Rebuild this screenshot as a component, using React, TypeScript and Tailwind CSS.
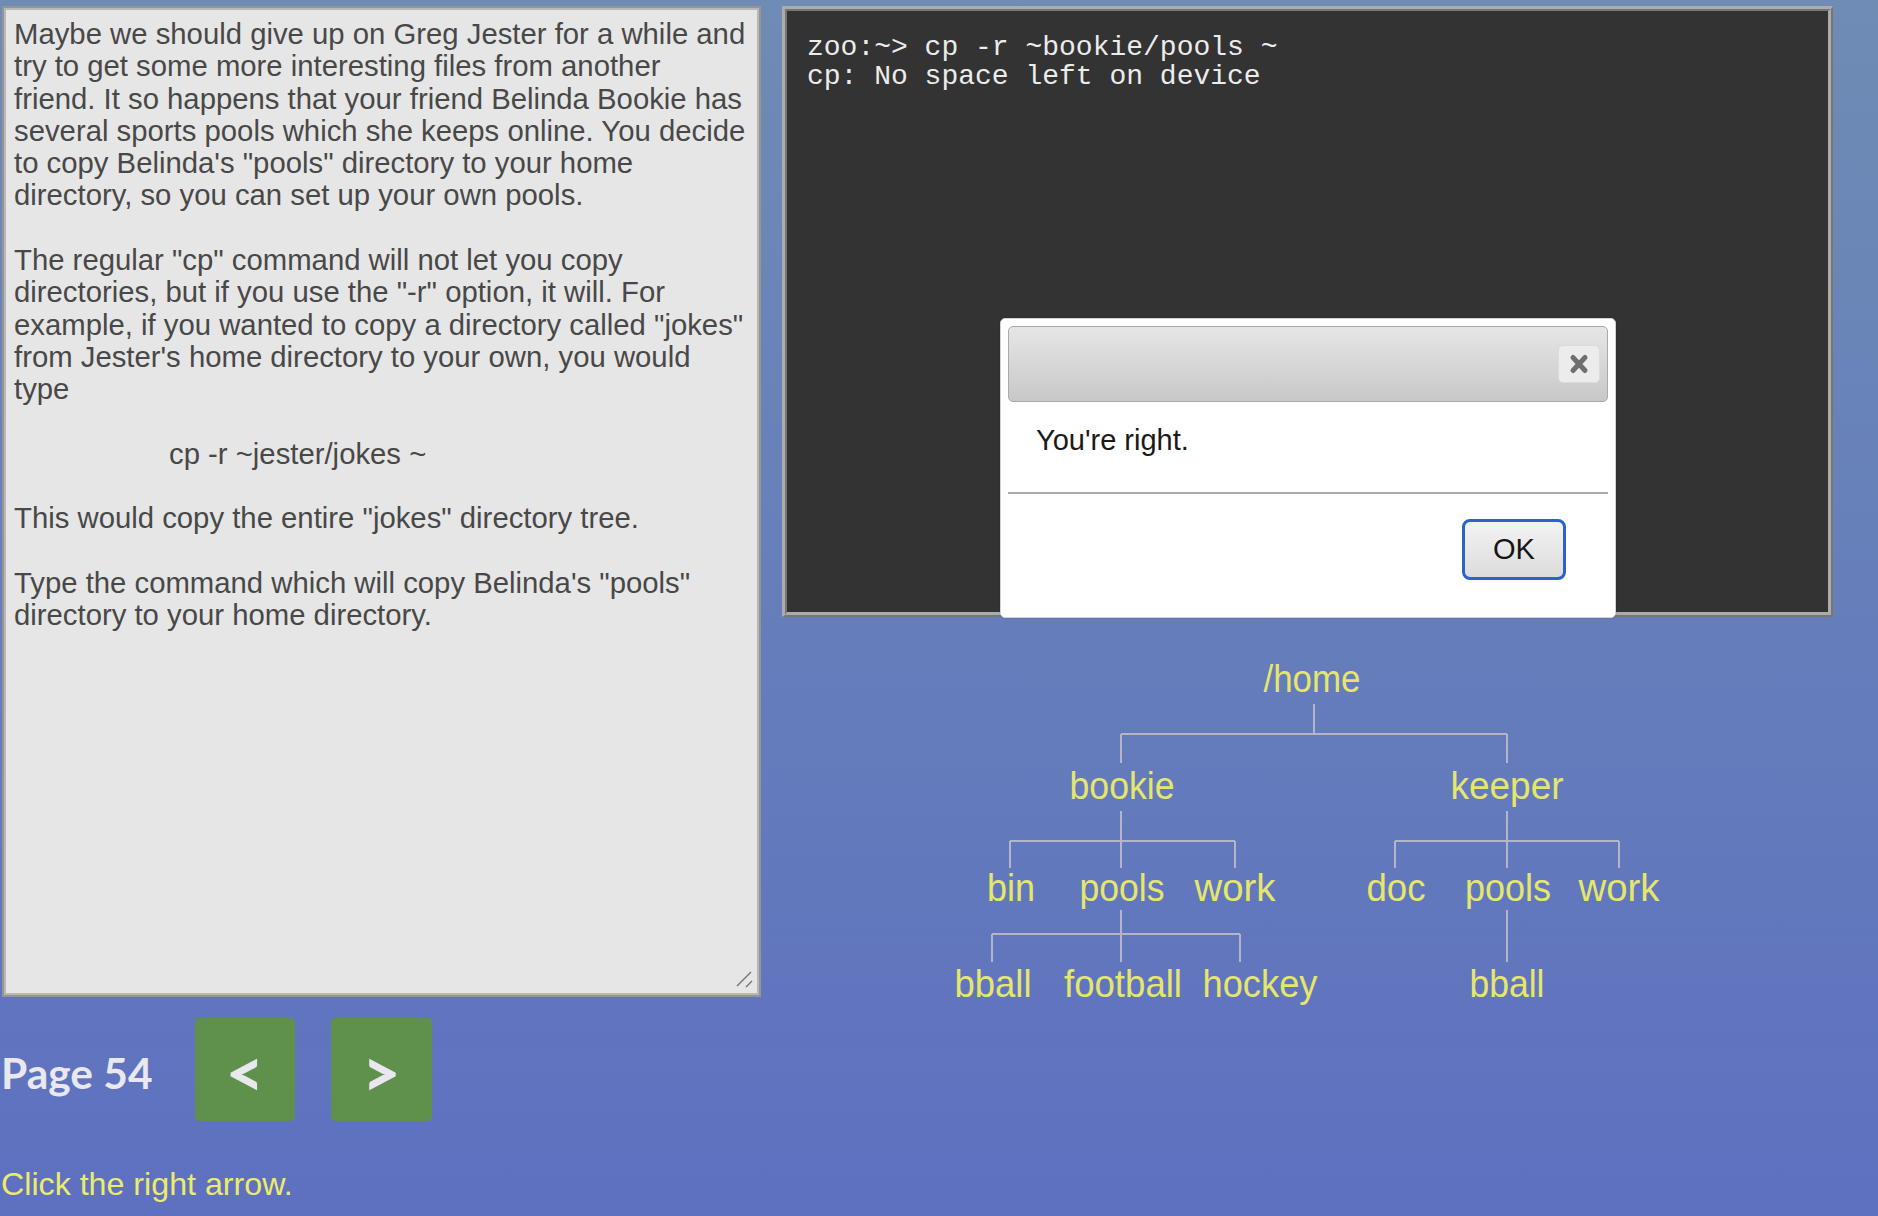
const lessonLines = [
  "Maybe we should give up on Greg Jester for a while and",
  "try to get some more interesting files from another",
  "friend. It so happens that your friend Belinda Bookie has",
  "several sports pools which she keeps online. You decide",
  'to copy Belinda\'s "pools" directory to your home',
  "directory, so you can set up your own pools.",
  "",
  'The regular "cp" command will not let you copy',
  'directories, but if you use the "-r" option, it will. For',
  'example, if you wanted to copy a directory called "jokes"',
  "from Jester's home directory to your own, you would",
  "type",
  "",
  "cp -r ~jester/jokes ~",
  "",
  'This would copy the entire "jokes" directory tree.',
  "",
  'Type the command which will copy Belinda\'s "pools"',
  "directory to your home directory.",
]

// tree diagram, coordinates are page pixels (viewBox is offset to match)
const treeWords = [
  { t: "/home", x: 1312, y: 692, w: 97 },
  { t: "bookie", x: 1122, y: 799, w: 105 },
  { t: "keeper", x: 1507, y: 799, w: 113 },
  { t: "bin", x: 1011, y: 901, w: 48 },
  { t: "pools", x: 1122, y: 901, w: 85 },
  { t: "work", x: 1235, y: 901, w: 81 },
  { t: "doc", x: 1396, y: 901, w: 59 },
  { t: "pools", x: 1508, y: 901, w: 86 },
  { t: "work", x: 1619, y: 901, w: 81 },
  { t: "bball", x: 993, y: 997, w: 77 },
  { t: "football", x: 1123, y: 997, w: 118 },
  { t: "hockey", x: 1260, y: 997, w: 115 },
  { t: "bball", x: 1507, y: 997, w: 75 },
]

const treeLines = [
  "M1314 704V734",
  "M1121 734H1507",
  "M1121 734V763",
  "M1507 734V763",
  "M1121 811V868",
  "M1010 841H1235",
  "M1010 841V868",
  "M1235 841V868",
  "M1507 811V868",
  "M1395 841H1619",
  "M1395 841V868",
  "M1619 841V868",
  "M1121 910V962",
  "M992 934H1240",
  "M992 934V962",
  "M1240 934V962",
  "M1507 910V962",
]

function LessonBox() {
  return (
    <div className="relative ml-[2px] mt-[6px] h-[991px] w-[759px] border-2 border-[#959595]">
      <div className="h-full w-full border-2 border-[#b8b8b8] bg-[#e6e6e6] pl-[8px] pt-[8px] text-[29.3px] leading-[32.3px] text-[#484848]">
        {lessonLines.map((line, i) => (
          <div
            key={i}
            className={`h-[32.3px] whitespace-pre ${line.startsWith("cp -r") ? "pl-[155px]" : ""}`}
          >
            {line}
          </div>
        ))}
      </div>
      <svg className="absolute left-[731px] top-[962px] h-[20px] w-[20px]" viewBox="0 0 20 20">
        <path d="M2 16L16 2M11 17L17 11" stroke="#727272" strokeWidth="1.4" fill="none" />
      </svg>
    </div>
  )
}

function Pager() {
  return (
    <div className="mt-[21px] flex h-[103px] items-start">
      <div className="mt-[30px] w-[195px] pl-[1px] font-['Lato',sans-serif] text-[42.5px] font-bold leading-[50px] text-[#e8e8ee]">
        Page 54
      </div>
      <div className="flex gap-[36px]">
        <button className="flex h-[103px] w-[100px] items-center justify-center rounded-[5px] bg-[#60914c] pt-[4px] font-['Lato',sans-serif] text-[66px] font-black leading-none text-[#e8e8ee]">
          &lt;
        </button>
        <button className="flex h-[103px] w-[101px] items-center justify-center rounded-[5px] bg-[#60914c] pt-[4px] font-['Lato',sans-serif] text-[66px] font-black leading-none text-[#e8e8ee]">
          &gt;
        </button>
      </div>
    </div>
  )
}

function Terminal() {
  return (
    <div className="mt-[6px] h-[611px] w-[1051px] border-t-[3px] border-l-[3px] border-r-[2px] border-b-[2px] border-t-[#acacac] border-l-[#acacac] border-r-[#767676] border-b-[#767676]">
      <div className="h-full w-full border-t-[2px] border-l-[2px] border-r-[3px] border-b-[3px] border-t-[#767676] border-l-[#767676] border-r-[#acacac] border-b-[#acacac] bg-[#333333] pl-[20px] pt-[22px] font-['Liberation_Mono','Courier_New',monospace] text-[28px] leading-[29px] text-[#ececec]">
        <div className="whitespace-pre">zoo:~&gt; cp -r ~bookie/pools ~</div>
        <div className="whitespace-pre">cp: No space left on device</div>
      </div>
    </div>
  )
}

function AlertDialog() {
  return (
    <div className="absolute left-[218px] top-[318px] flex h-[300px] w-[616px] flex-col rounded-[5px] border border-[#d2d2d2] bg-white shadow-[0_0_2px_rgba(0,0,0,0.2)]">
      <div className="mx-[7px] mt-[7px] flex h-[76px] items-center justify-end rounded-[5px] border border-[#a9a9a9] bg-linear-to-b from-[#e6e6e6] to-[#c8c8c8] pr-[7px]">
        <div className="flex h-[38px] w-[42px] items-center justify-center rounded-[5px] border border-[#dcdcdc] bg-[#ececec]">
          <svg width="20" height="22" viewBox="0 0 20 22">
            <path d="M4 4.5L16 17.5M16 4.5L4 17.5" stroke="#6f6f6f" strokeWidth="5" strokeLinecap="round" fill="none" />
          </svg>
        </div>
      </div>
      <div className="mt-[22px] pl-[35px] text-[29px] leading-[32px] text-[#1a1a1a]">You're right.</div>
      <div className="mx-[7px] mt-[36px] h-[2px] bg-[#ababab]" />
      <div className="mr-[49px] mt-[25px] flex justify-end">
        <button className="h-[61px] w-[104px] rounded-[8px] border-[3px] border-[#2b62cc] bg-linear-to-b from-[#f3f3f3] to-[#dcdcdc] text-[29px] leading-none text-[#151515]">
          OK
        </button>
      </div>
    </div>
  )
}

function DirectoryTree() {
  return (
    <svg width="1096" height="400" viewBox="782 617 1096 400" className="block">
      {treeLines.map((d, i) => (
        <path key={i} d={d} stroke="#b4b5c8" strokeWidth="2" fill="none" />
      ))}
      {treeWords.map((w, i) => (
        <text
          key={i}
          x={w.x}
          y={w.y}
          textAnchor="middle"
          textLength={w.w}
          lengthAdjust="spacingAndGlyphs"
          fontFamily="Liberation Sans, Arial, sans-serif"
          fontSize="39"
          fill="#e6e66c"
        >
          {w.t}
        </text>
      ))}
    </svg>
  )
}

export default function App() {
  return (
    <div className="flex h-[1216px] w-[1878px] overflow-hidden bg-linear-to-b from-[#6e8cb4] to-[#5e70c0] font-['Liberation_Sans',Arial,sans-serif]">
      <div className="flex w-[761px] shrink-0 flex-col">
        <LessonBox />
        <Pager />
        <div className="mt-[45px] pl-[1px] text-[32.2px] leading-[36px] text-[#ecec6a]">
          Click the right arrow.
        </div>
      </div>
      <div className="relative ml-[21px] flex flex-col">
        <Terminal />
        <AlertDialog />
        <DirectoryTree />
      </div>
    </div>
  )
}
